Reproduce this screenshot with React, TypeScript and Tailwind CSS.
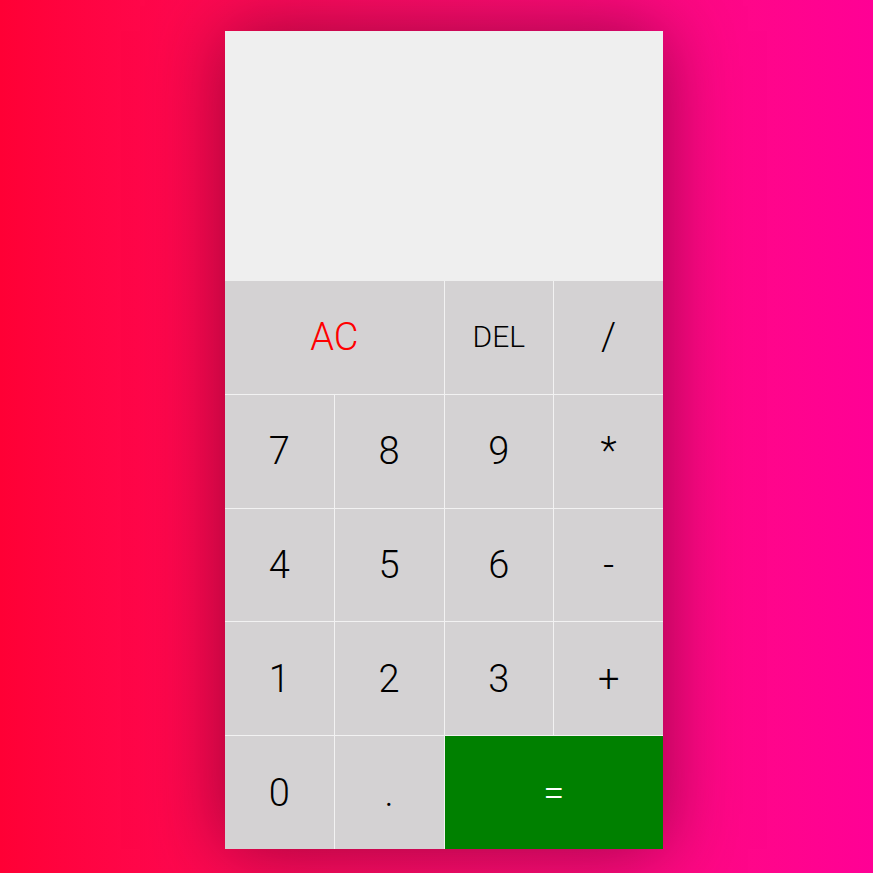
const keys: { label: string; span?: boolean; kind?: "ac" | "eq" | "small" }[] = [
  { label: "AC", span: true, kind: "ac" },
  { label: "DEL", kind: "small" },
  { label: "/" },
  { label: "7" },
  { label: "8" },
  { label: "9" },
  { label: "*" },
  { label: "4" },
  { label: "5" },
  { label: "6" },
  { label: "-" },
  { label: "1" },
  { label: "2" },
  { label: "3" },
  { label: "+" },
  { label: "0" },
  { label: "." },
  { label: "=", span: true, kind: "eq" },
];

export default function App() {
  return (
    <div
      className="h-[873px] w-full overflow-hidden bg-gradient-to-r from-[#ff0035] to-[#ff0095] pt-[31px]"
      style={{ fontFamily: "Roboto, 'Liberation Sans', sans-serif" }}
    >
      <div className="ml-[225px] w-[438px] shadow-[0_0_70px_rgba(70,0,30,0.55)]">
        <div className="h-[250px] bg-[#efefef]" />
        <div className="grid grid-cols-4 grid-rows-[repeat(5,112.8px)] gap-px bg-[#f2f2f2]">
          {keys.map((k) => (
            <button
              key={k.label}
              className={`flex items-center justify-center font-light leading-none ${
                k.span ? "col-span-2" : ""
              } ${
                k.kind === "eq"
                  ? "bg-[#008000] text-[38px] text-white"
                  : k.kind === "ac"
                    ? "bg-[#d4d2d3] text-[38px] text-[#ff0000]"
                    : k.kind === "small"
                      ? "bg-[#d4d2d3] text-[30px] text-black"
                      : "bg-[#d4d2d3] text-[38px] text-black"
              }`}
            >
              {k.label}
            </button>
          ))}
        </div>
      </div>
    </div>
  );
}
